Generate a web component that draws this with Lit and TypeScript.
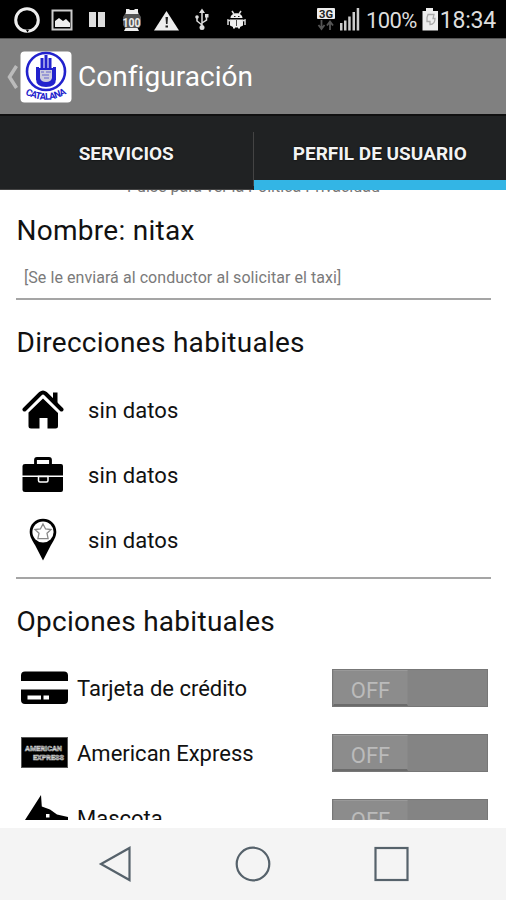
import { LitElement, html, css, svg } from "lit";
import { customElement, property } from "lit/decorators.js";

const statusLeft = svg`
  <circle cx="27" cy="20" r="11.3" fill="none" stroke="#eee" stroke-width="3"/>
  <path d="M26 30l1.500 2.500 1.500-2.500z" fill="#000"/>
  <rect x="52.500" y="10.500" width="19" height="19" fill="none" stroke="#ccc" stroke-width="2"/>
  <path d="M55 27v-6l4-3 4 3 3-2 4 4v4z" fill="#eee"/>
  <path d="M89 12h7v15h-7zM98 12h7v15h-7z" fill="#ddd"/>
  <path d="M126 9h3l1 1h4l1-1h3v3l1 3h-14l1-3zM126 27h11l2 4h-15z" fill="#eee"/>
  <path d="M125 14h14l2 3v8l-2 3h-14l-2-3v-8z" fill="#555"/>
  <text x="122.500" y="26.500" font-size="13" font-weight="700" fill="#eee" textLength="18" lengthAdjust="spacingAndGlyphs">100</text>
  <path d="M166.500 11l12.500 19.500h-25z" fill="#eee"/>
  <path d="M165.500 17h2.500l-.5 7h-1.500zM165.500 25.500h2.500v2h-2.500z" fill="#222"/>
  <g stroke="#ddd" stroke-width="1.500" fill="none"><path d="M202 12v14M197 18v3l5 4M206.500 16v4l-4.500 3"/></g>
  <path d="M202 8.500l3 4.500h-6z" fill="#ddd"/><circle cx="202" cy="27.500" r="2.500" fill="#ddd"/><circle cx="197" cy="17" r="1.800" fill="#ddd"/><path d="M205 14h3.500v3.500h-3.500z" fill="#ddd"/>
  <path d="M230.500 18c0-6.500 12-6.500 12 0zM230 19.500h13v6l-3 1.500v1.500h-2v-1h-3v1h-2v-1.500l-3-1.500z" fill="#eee"/>
  <path d="M232 11l2 3M241 11l-2 3M231 21l-3-1v5M242 21l3-1v5" stroke="#ddd" stroke-width="1.500" fill="none"/>
  <path d="M234 16h1.500v1h-1.500zM238 16h1.500v1h-1.500zM236.200 20h.8v6h-.8z" fill="#222"/>`;

const statusRight = svg`
  <rect x="317" y="8" width="18" height="11" rx="1" fill="#eee"/>
  <text x="319" y="17.500" font-size="11" font-weight="700" fill="#222" textLength="14" lengthAdjust="spacingAndGlyphs">3G</text>
  <path d="M321.500 20v8M318.500 25l3 4 3-4M330 30v-8M327 25.500l3-4 3 4" fill="none" stroke="#555" stroke-width="1.800"/>
  <path d="M340 23h2.500v7.500h-2.500zM344 20.500h2.500v10h-2.500zM348.200 16.500h2.500v14h-2.500zM352.500 12h2.500v18.500h-2.500zM356.700 8h2.500v22.500h-2.500z" fill="#ccc"/>
  <path d="M426 8h7v3h5v19.500h-15.500v-19.500h3.500z" fill="#eee"/>
  <path d="M428 14.500h6l-1 4h2c0 4-2 6-5 6v-3h-3v-4z" fill="none" stroke="#aaa" stroke-width="1.300"/>`;

const icons: Record<string, unknown> = {
  house: svg`<svg width="42" height="41" viewBox="0 0 42 41">
    <path d="M2.500 20.500L18.500 4.500Q21 2.500 23.500 4.500L39.500 20.500" fill="none" stroke="#000" stroke-width="4" stroke-linecap="round"/>
    <path d="M31 3.500h4.500v11l-4.500-4.500z"/>
    <path d="M21 9.500L36 24v13q0 2.500-2.500 2.500H25.500V29h-8v10.500H9Q6.500 39.500 6.500 37V23.500z"/></svg>`,
  briefcase: svg`<svg width="42" height="37" viewBox="0 0 42 37">
    <path d="M13.500 8V4q0-1.500 1.500-1.500h12q1.500 0 1.500 1.500v4" fill="none" stroke="#000" stroke-width="2.800"/>
    <path d="M3 8h36q2 0 2 2v9.500H0.500V10q0-2 2.500-2zM0.500 21H41V34q0 2-2 2H3q-2.500 0-2.500-2z"/>
    <path d="M16.500 20.500h9.500v4q0 1.500-1.500 1.500h-6.500q-1.500 0-1.500-1.500z" stroke="#fff" stroke-width="1.500"/></svg>`,
  pin: svg`<svg width="28" height="43" viewBox="0 0 28 43">
    <path d="M14 .8c8 0 13.300 6 13.300 13.200 0 5-3.300 9.500-5.300 13L14 42.500 6 27C4 23.500.7 19 .7 14 .7 6.800 6 .8 14 .8z"/>
    <circle cx="14" cy="14" r="10.600" fill="#fff"/>
    <path d="M14 6l2.600 5 5.400.6-4 3.700 1.100 5.400h-10.200l1.100-5.400-4-3.700 5.400-.6z" fill="#fff" stroke="#888" stroke-width="1.300"/></svg>`,
  card: svg`<svg width="47" height="34" viewBox="0 0 47 34">
    <path d="M4 .5h39q4 0 4 4v5.500H0V4.500q0-4 4-4zM0 18.500h47v10.500q0 4-4 4H4q-4 0-4-4z"/>
    <path d="M6.500 24.500h13.500v4H6.500zM22.500 24.500h5.500v4h-5.500z" fill="#fff"/></svg>`,
  amex: svg`<svg width="47" height="31" viewBox="0 0 47 31">
    <rect x=".5" y=".5" width="46" height="30" stroke="#555"/>
    <g fill="#222" stroke="#ccc" stroke-width=".6" font-size="7.500" font-weight="700">
    <text x="4" y="14" textLength="37" lengthAdjust="spacingAndGlyphs">AMERICAN</text>
    <text x="12" y="22.500" textLength="31" lengthAdjust="spacingAndGlyphs">EXPRESS</text></g></svg>`,
  dog: svg`<svg width="47" height="46" viewBox="0 0 47 46">
    <path d="M4 25L20 0l.8 11.500 8.200 3 7 5 11 2.500v3.500l-3 4H31l-7 16H2z"/><path d="M25 19h3.500v3.500h-3.500z" fill="#fff"/></svg>`,
};

@customElement("address-row")
class AddressRow extends LitElement {
  @property() icon = "house";
  static styles = css`
    :host { display: flex; align-items: center; height: 65.300px; flex: none; }
    .icon { width: 54px; display: flex; justify-content: center; margin: 0 18px 1px 0; }
    .label { font-size: 22px; letter-spacing: .1px; padding-top: 1px; }
  `;
  render() {
    return html`<span class="icon">${icons[this.icon]}</span><span class="label">sin datos</span>`;
  }
}

@customElement("option-row")
class OptionRow extends LitElement {
  @property() icon = "card";
  @property() label = "";
  static styles = css`
    :host { display: flex; align-items: center; height: 65.300px; flex: none; }
    .icon { width: 47px; margin: 0 9.500px 0 4.500px; display: flex; }
    .label { flex: 1; font-size: 22px; white-space: nowrap; padding-top: 1px; }
    .switch { width: 156px; height: 38px; margin-right: 3px; box-sizing: border-box; background: #848484; border: 1px solid #777; display: flex; }
    .thumb { width: 75px; height: 36px; box-sizing: border-box; background: #8c8c8c; border: 1px solid #888; border-top-color: #999; border-bottom: 2px solid #6b6b6b; color: #bbb; font-size: 22px; line-height: 39px; text-align: center; }
  `;
  render() {
    return html`<span class="icon">${icons[this.icon]}</span>
      <span class="label">${this.label}</span>
      <span class="switch"><span class="thumb">OFF</span></span>`;
  }
}

@customElement("app-root")
class AppRoot extends LitElement {
  static styles = css`
    :host { display: flex; flex-direction: column; width: 506px; height: 900px; overflow: hidden; background: #fff; color: #111; font-family: Roboto, sans-serif; }
    .status { height: 38px; flex: none; background: #000; display: grid; }
    .status svg, .readings { grid-area: 1 / 1; }
    .readings { display: flex; justify-content: flex-end; padding-right: 10px; color: #ddd; font-size: 23px; line-height: 41px; }
    .percent { margin-right: 23px; font-size: 22px; letter-spacing: -.6px; }
    .time { letter-spacing: -.2px; }
    .header { height: 76px; flex: none; box-sizing: border-box; background: #808080; border-top: 1px solid #555; display: flex; align-items: center; padding-left: 6px; }
    .back { margin-right: 2px; }
    .logo { margin-right: 6px; }
    .title { color: #fff; font-size: 28px; letter-spacing: .05px; }
    .tabs { height: 76px; flex: none; box-sizing: border-box; display: flex; background: #202223; border-top: 2px solid #101010; color: #f3f3f3; font-size: 19px; font-weight: 700; }
    .tab { flex: 1; display: flex; align-items: center; justify-content: center; box-sizing: border-box; padding-top: 2px; text-shadow: 0 0 2px #000; border-bottom: 1px solid #444; }
    .tab.active { border-bottom: 10px solid #33b5e5; padding-top: 11px; }
    .separator { width: 1px; height: 54px; margin-top: 16px; background: #444; }
    .content { height: 630px; flex: none; overflow: hidden; padding: 0 15px 0 16px; box-sizing: border-box; display: flex; flex-direction: column; }
    .policy { margin-top: -15px; height: 24px; flex: none; line-height: 24px; text-align: center; color: #777; font-size: 16px; }
    .heading { flex: none; font-size: 28px; line-height: 36px; letter-spacing: .28px; white-space: nowrap; text-indent: .5px; }
    .name { margin-top: 14px; }
    .places { margin: 25px 0 16px; }
    .options { margin: 25px 0 15px; }
    .note { margin: 19px 0 0 8px; height: 20px; line-height: 20px; flex: none; font-size: 16px; letter-spacing: .06px; color: #7a7a7a; }
    .line { height: 2px; flex: none; background: #a5a5a5; }
    .after-note { margin-top: 10px; }
    .after-places { margin-top: 4px; }
    .bottom { height: 8px; flex: none; }
    .nav { height: 72px; flex: none; background: #f4f4f4; }
  `;
  render() {
    return html`
      <div class="status">
        <svg width="506" height="38">${statusLeft}${statusRight}</svg>
        <div class="readings"><span class="percent">100%</span><span class="time">18:34</span></div>
      </div>
      <div class="header">
        <svg class="back" width="12" height="28" viewBox="0 0 12 28"><path d="M10.500 3L3.500 14l7 11" fill="none" stroke="#bbb" stroke-width="3.500"/></svg>
        <svg class="logo" width="52" height="52" viewBox="0 0 52 52">
          <rect x=".5" y=".5" width="51" height="51" rx="4" fill="#fff"/>
          <ellipse cx="26" cy="20.500" rx="19" ry="18.500" fill="none" stroke="#2222cd" stroke-width="2.600"/>
          <path d="M16 17v11q0 8 10 8t10-8V17" fill="#2222cd"/>
          <path d="M17.500 29V16M22 20V7M26 20V4M30 20V7M34.500 29V16" stroke="#2222cd" stroke-width="3"/>
          <path d="M20 19h12v8q-1 4-6 4t-6-4z" fill="#ccd"/>
          <path d="M21 21h3M26 21h5M22 24h7M24 27h5" stroke="#66c" stroke-width="1"/>
          <path id="arc" d="M5 43Q26 55 48 42" fill="none"/>
          <text font-size="9.500" font-weight="700" fill="#2222cd"><textPath href="#arc" textLength="44">CATALANA</textPath></text>
        </svg>
        <span class="title">Configuración</span>
      </div>
      <div class="tabs">
        <div class="tab">SERVICIOS</div><div class="separator"></div><div class="tab active">PERFIL DE USUARIO</div>
      </div>
      <div class="content">
        <div class="policy">Pulse para ver la Política Privacidad</div>
        <div class="heading name">Nombre: nitax</div>
        <div class="note">[Se le enviará al conductor al solicitar el taxi]</div>
        <div class="line after-note"></div>
        <div class="heading places">Direcciones habituales</div>
        <address-row icon="house"></address-row>
        <address-row icon="briefcase"></address-row>
        <address-row icon="pin"></address-row>
        <div class="line after-places"></div>
        <div class="heading options">Opciones habituales</div>
        <option-row icon="card" label="Tarjeta de crédito"></option-row>
        <option-row icon="amex" label="American Express"></option-row>
        <option-row icon="dog" label="Mascota"></option-row>
      </div>
      <div class="bottom"></div>
      <div class="nav">
        <svg width="506" height="72" fill="none" stroke="#56626b" stroke-width="2.200">
          <path d="M129.500 20v32L101 36z"/><circle cx="253" cy="36" r="16.300"/><rect x="375.500" y="20" width="32" height="32"/>
        </svg>
      </div>`;
  }
}
